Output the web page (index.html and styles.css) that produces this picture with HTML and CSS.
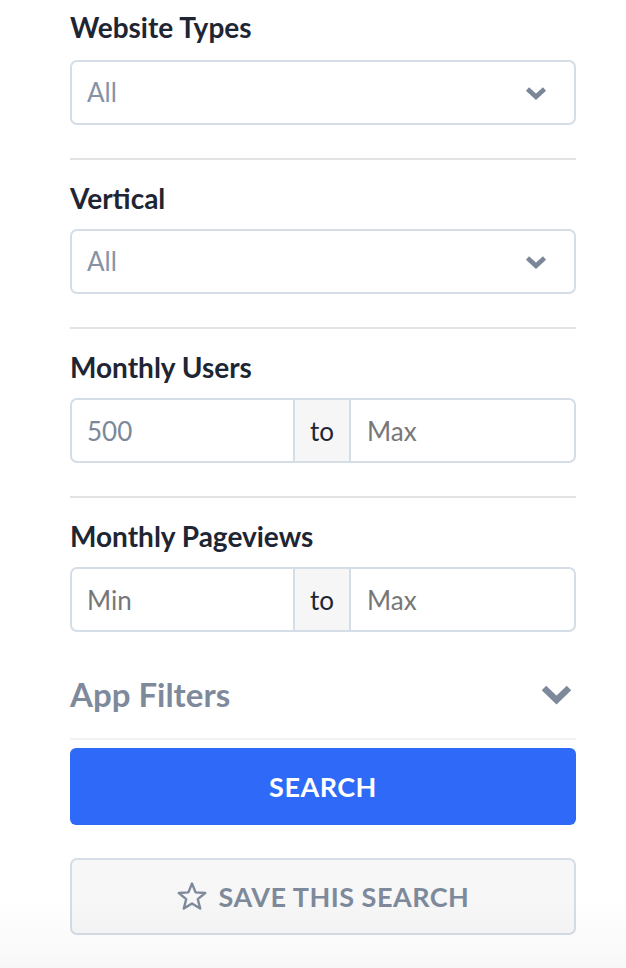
FILE: index.html
```html
<!DOCTYPE html>
<html lang="en">
<head>
<meta charset="utf-8">
<title>Filters</title>
<link rel="stylesheet" href="styles.css">
</head>
<body>
<div class="panel">
  <section class="group group-first">
    <div class="label">Website Types</div>
    <div class="select">
      <span class="select-value">All</span>
      <svg class="chev" viewBox="0 0 22 13" width="22" height="13"><polyline points="2.5,2 11,9.8 19.5,2" fill="none" stroke="#7b8799" stroke-width="4.6"/></svg>
    </div>
  </section>
  <div class="divider"></div>
  <section class="group">
    <div class="label">Vertical</div>
    <div class="select">
      <span class="select-value">All</span>
      <svg class="chev" viewBox="0 0 22 13" width="22" height="13"><polyline points="2.5,2 11,9.8 19.5,2" fill="none" stroke="#7b8799" stroke-width="4.6"/></svg>
    </div>
  </section>
  <div class="divider"></div>
  <section class="group">
    <div class="label">Monthly Users</div>
    <div class="range">
      <div class="range-input"><span class="val">500</span></div>
      <div class="range-to">to</div>
      <div class="range-input range-right"><span class="ph">Max</span></div>
    </div>
  </section>
  <div class="divider"></div>
  <section class="group">
    <div class="label">Monthly Pageviews</div>
    <div class="range">
      <div class="range-input"><span class="ph">Min</span></div>
      <div class="range-to">to</div>
      <div class="range-input range-right"><span class="ph">Max</span></div>
    </div>
  </section>
  <div class="app-filters">
    <span class="app-title">App Filters</span>
    <svg class="app-chev" viewBox="0 0 33 21" width="33" height="21"><polyline points="4,4 16.5,16 29,4" fill="none" stroke="#7e8a9b" stroke-width="6.5"/></svg>
  </div>
  <div class="divider-light"></div>
  <button class="btn-search">SEARCH</button>
  <button class="btn-save">
    <svg class="star" viewBox="0 0 30 30" width="30" height="30"><polygon points="15,2.5 18.6,11.4 28.2,12 20.8,18.2 23.2,27.5 15,22.4 6.8,27.5 9.2,18.2 1.8,12 11.4,11.4" fill="none" stroke="#7e8a9b" stroke-width="2.4" stroke-linejoin="round"/></svg>
    <span>SAVE THIS SEARCH</span>
  </button>
</div>
<div class="bottom-fade"></div>
</body>
</html>
```
FILE: styles.css
```css
html, body {
  margin: 0;
  padding: 0;
  background: #ffffff;
}
body {
  font-family: Lato, "Noto Sans", sans-serif;
  color: #1e2533;
}
.panel {
  padding: 11px 50px 0 70px;
  display: flex;
  flex-direction: column;
}
.label {
  font-size: 28px;
  line-height: 32px;
  font-weight: 700;
  color: #1e2533;
  margin-bottom: 15px;
}
.group-first .label {
  margin-bottom: 17px;
}
.select {
  box-sizing: border-box;
  height: 65px;
  border: 2px solid #d5dde6;
  border-radius: 7px;
  display: flex;
  align-items: center;
  justify-content: space-between;
  padding: 0 27px 0 15px;
}
.select-value {
  font-size: 26px;
  color: #8793a5;
  padding-bottom: 2px;
}
.chev {
  display: block;
  margin-top: 2px;
}
.divider {
  height: 2px;
  background: #e3e3e3;
  margin: 33px 0 22px;
}
.range {
  box-sizing: border-box;
  height: 65px;
  border: 2px solid #d5dde6;
  border-radius: 7px;
  display: flex;
  overflow: hidden;
}
.range-input {
  box-sizing: border-box;
  flex: 0 0 221px;
  display: flex;
  align-items: center;
  padding-left: 15px;
  font-size: 26px;
}
.range-right {
  flex: 1 1 auto;
  padding-left: 16px;
}
.range-to {
  flex: 0 0 58px;
  box-sizing: border-box;
  background: #f6f6f6;
  border-left: 2px solid #d5dde6;
  border-right: 2px solid #d5dde6;
  display: flex;
  align-items: center;
  justify-content: center;
  font-size: 26px;
  color: #1e2533;
}
.val {
  color: #7b8899;
}
.ph {
  color: #777777;
}
.app-filters {
  margin-top: 42px;
  height: 40px;
  display: flex;
  align-items: center;
  justify-content: space-between;
  padding-right: 3px;
}
.app-title {
  font-size: 33px;
  font-weight: 700;
  color: #7e8a9b;
}
.app-chev {
  display: block;
}
.divider-light {
  height: 2px;
  background: #f1f1f1;
  margin: 24px 0 8px;
}
button {
  font-family: Lato, "Noto Sans", sans-serif;
  cursor: pointer;
}
.btn-search {
  height: 77px;
  border: none;
  border-radius: 6px;
  background: #2f69f8;
  color: #ffffff;
  font-size: 27px;
  font-weight: 700;
  letter-spacing: 0.5px;
}
.btn-save {
  margin-top: 33px;
  height: 77px;
  border: 2px solid #d5dde6;
  border-radius: 7px;
  background: #f7f7f7;
  color: #7e8a9b;
  font-size: 27px;
  font-weight: 700;
  letter-spacing: 0.5px;
  display: flex;
  align-items: center;
  justify-content: center;
  gap: 12px;
}
.star {
  display: block;
  margin-bottom: 2px;
}
.bottom-fade {
  position: fixed;
  left: 0;
  right: 0;
  bottom: 0;
  height: 70px;
  background: linear-gradient(to bottom, rgba(0,0,0,0), rgba(0,0,0,0.03));
  pointer-events: none;
}
```
